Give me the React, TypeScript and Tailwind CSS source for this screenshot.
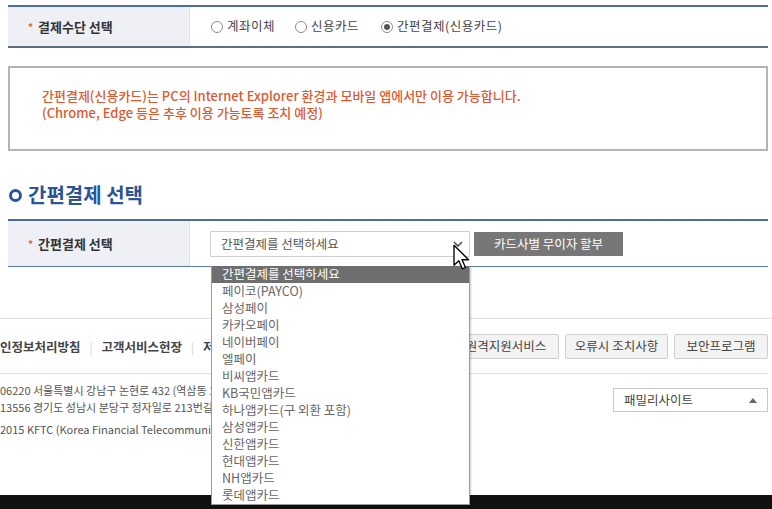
import React from 'react';

const payOptions = [
  '간편결제를 선택하세요',
  '페이코(PAYCO)',
  '삼성페이',
  '카카오페이',
  '네이버페이',
  '엘페이',
  '비씨앱카드',
  'KB국민앱카드',
  '하나앱카드(구 외환 포함)',
  '삼성앱카드',
  '신한앱카드',
  '현대앱카드',
  'NH앱카드',
  '롯데앱카드',
];

const Radio: React.FC<{ label: string; checked?: boolean; className?: string }> = ({ label, checked, className = '' }) => (
  <label className={`flex items-center gap-[4px] ${className}`}>
    <span className="flex h-[12px] w-[12px] items-center justify-center rounded-full border border-[#8a8a8a] bg-white">
      {checked && <span className="h-[6px] w-[6px] rounded-full bg-[#555]" />}
    </span>
    <span className="tracking-[0.5px]">{label}</span>
  </label>
);

const RowLabel: React.FC<{ text: string }> = ({ text }) => (
  <div className="flex w-[182px] shrink-0 items-center border-r border-[#dfe3ec] bg-[#eef0f6] pl-[20px] text-[13px] font-semibold text-[#333]">
    <span className="mr-[5px] text-[10px] text-[#e2603c]">*</span>
    {text}
  </div>
);

const Cursor = () => (
  <svg className="absolute left-[452px] top-[244px]" width="20" height="28" viewBox="0 0 14 21">
    <path d="M1 1 L1 16 L4.6 12.6 L7.2 18.6 L9.6 17.6 L7 11.8 L12 11.8 Z" fill="#fff" stroke="#000" strokeWidth="1" strokeLinejoin="round" />
  </svg>
);

export default function App() {
  return (
    <div className="relative h-[509px] w-[772px] overflow-hidden bg-white font-['Noto_Sans_CJK_KR','Noto_Sans',sans-serif] text-[#444]">
      <div className="pl-2 pr-1 pt-[5px]">
        {/* 결제수단 */}
        <div className="flex h-[43px] border-t-2 border-b-2 border-t-[#4e6d9d] border-b-[#5f6e7c]">
          <RowLabel text="결제수단 선택" />
          <div className="flex items-center pl-[21px] text-[12.5px] text-[#444]">
            <Radio label="계좌이체" />
            <Radio label="신용카드" className="ml-[20px]" />
            <Radio label="간편결제(신용카드)" checked className="ml-[22px]" />
          </div>
        </div>

        {/* 안내 */}
        <div className="mt-[18px] h-[85px] border-2 border-[#b4b4b4] pl-[32px] pt-[19px] text-[13px] font-medium leading-[17px] text-[#dc5a32]">
          <p>간편결제(신용카드)는 PC의 Internet Explorer 환경과 모바일 앱에서만 이용 가능합니다.</p>
          <p>(Chrome, Edge 등은 추후 이용 가능토록 조치 예정)</p>
        </div>

        {/* 간편결제 선택 */}
        <h2 className="mt-[31px] flex h-[26px] items-center gap-[6px] text-[20px] font-bold text-[#2b5595]">
          <span className="ml-[1px] h-[13px] w-[13px] rounded-full border-[3.5px] border-[#2b5595]" />
          간편결제 선택
        </h2>
        <div className="mt-[11px] flex h-[48px] border-t-2 border-b border-t-[#4e6d9d] border-b-[#5d7aa6]">
          <RowLabel text="간편결제 선택" />
          <div className="flex items-center pl-[20px] pt-[1px]">
            <div className="flex h-[26px] w-[260px] items-center justify-between border border-[#cfcfcf] bg-white pl-[10px] pr-[6px] text-[12.5px] text-[#555]">
              <span>간편결제를 선택하세요</span>
              <svg width="10" height="8" viewBox="0 0 10 8">
                <path d="M1 2 L5 6 L9 2" fill="none" stroke="#555" strokeWidth="1.6" />
              </svg>
            </div>
            <button className="ml-[4px] h-[24px] w-[149px] bg-[#777] text-[12.5px] text-white">카드사별 무이자 할부</button>
          </div>
        </div>
      </div>

      {/* footer */}
      <div className="mt-[51px] border-t border-[#e2e2e2] shadow-[0_-1px_2px_rgba(0,0,0,0.04)]">
        <div className="flex h-[54px] items-center justify-between pr-[4px]">
          <div className="flex items-center pt-[3px] text-[12.5px] font-semibold text-[#444]">
            <span>인정보처리방침</span>
            <span className="mx-[9px] text-[11px] font-normal text-[#ccc]">|</span>
            <span>고객서비스헌장</span>
            <span className="mx-[9px] text-[11px] font-normal text-[#ccc]">|</span>
            <span>저작권보호정책</span>
          </div>
          <div className="flex gap-[6px] pt-[1px] text-[12.5px] text-[#444]">
            <span className="flex h-[25px] w-[106px] items-center justify-center rounded-[2px] border border-[#cfcfcf] bg-[#f3f3f3]">원격지원서비스</span>
            <span className="flex h-[25px] w-[103px] items-center justify-center rounded-[2px] border border-[#cfcfcf] bg-[#f3f3f3]">오류시 조치사항</span>
            <span className="flex h-[25px] w-[94px] items-center justify-center rounded-[2px] border border-[#cfcfcf] bg-[#f3f3f3]">보안프로그램</span>
          </div>
        </div>
        <div className="mr-[4px] flex h-[122px] justify-between border-t border-[#e0e0e0]">
          <div className="pt-[8px] text-[11px] leading-[17px] text-[#555]">
            <p>06220 서울특별시 강남구 논현로 432 (역삼동 1-22)</p>
            <p>13556 경기도 성남시 분당구 정자일로 213번길 18</p>
            <p className="mt-[5px]">2015 KFTC (Korea Financial Telecommunications &amp; Clearings Institute)</p>
          </div>
          <div className="mt-[14px] flex h-[24px] w-[155px] items-center justify-between border border-[#c9c9c9] pl-[10px] pr-[10px] text-[12.5px] text-[#444]">
            <span>패밀리사이트</span>
            <svg width="8" height="5" viewBox="0 0 8 5">
              <path d="M0 5 L4 0 L8 5 Z" fill="#666" />
            </svg>
          </div>
        </div>
        <div className="h-[20px] bg-[#111]" />
      </div>

      {/* open select list */}
      <ul className="absolute left-[211px] top-[266px] w-[259px] border border-t-0 border-[#9a9a9a] bg-white text-[12.5px] text-[#666] shadow-[1px_1px_2px_rgba(0,0,0,0.2)]">
        {payOptions.map((opt, i) => (
          <li
            key={opt}
            className={`flex h-[17px] items-center pl-[10px] ${i === 0 ? 'bg-[#6e6e6e] text-white' : ''}`}
          >
            {opt}
          </li>
        ))}
      </ul>

      <Cursor />
    </div>
  );
}
